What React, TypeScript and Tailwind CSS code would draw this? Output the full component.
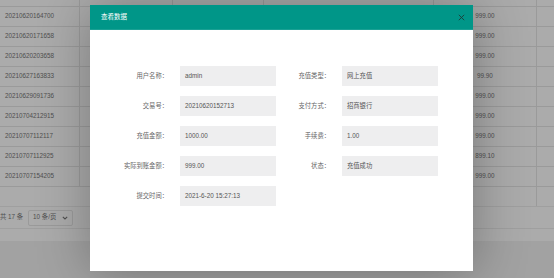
import React from "react";

const rows: [string, string, string, string, string][] = [
  ["20210620152713", "admin", "网上充值", "1000.00", "999.00"],
  ["20210620164700", "", "", "", "999.00"],
  ["20210620171658", "", "", "", "999.00"],
  ["20210620203658", "", "", "", "999.00"],
  ["20210627163833", "", "", "", "99.90"],
  ["20210629091736", "", "", "", "999.00"],
  ["20210704212915", "", "", "", "999.00"],
  ["20210707112117", "", "", "", "999.00"],
  ["20210707112925", "", "", "", "899.10"],
  ["20210707154205", "", "", "", "999.00"],
];

const fields: [string, string][] = [
  ["用户名称：", "admin"],
  ["充值类型：", "网上充值"],
  ["交易号：", "20210620152713"],
  ["支付方式：", "招商银行"],
  ["充值金额：", "1000.00"],
  ["手续费：", "1.00"],
  ["实际到账金额：", "999.00"],
  ["状态：", "充值成功"],
  ["提交时间：", "2021-6-20 15:27:13"],
];

const font = { fontFamily: '"Liberation Sans", "Noto Sans CJK SC", sans-serif' };

export default function App() {
  return (
    <div
      className="relative w-[554px] h-[278px] overflow-hidden bg-[#f2f2f2] text-[6.3px] leading-none"
      style={font}
    >
      {/* underlying page */}
      <div className="bg-white h-[241px] flex flex-col">
        <div className="-mt-[13px] flex flex-col">
          {rows.map((r, i) => (
            <div
              key={i}
              className="grid grid-cols-[80px_93px_91px_170px_103px_1fr] h-[20px] border-b border-[#e6e6e6] text-[#777]"
            >
              <div className="border-r border-[#e6e6e6] flex items-center pl-[5px]">{r[0]}</div>
              <div className="border-r border-[#e6e6e6] flex items-center justify-center">{r[1]}</div>
              <div className="border-r border-[#e6e6e6] flex items-center justify-center">{r[2]}</div>
              <div className="border-r border-[#e6e6e6] flex items-center justify-center">{r[3]}</div>
              <div className="border-r border-[#e6e6e6] flex items-center justify-center">{r[4]}</div>
              <div />
            </div>
          ))}
          <div className="grid grid-cols-[80px_93px_91px_170px_103px_1fr] h-[20px] border-b border-[#eeeeee]">
            <div />
            <div />
            <div />
            <div />
            <div className="border-r border-[#e6e6e6]" />
            <div />
          </div>
        </div>
        <div className="flex items-center h-[22px] border-b border-[#eeeeee] text-[#777]">
          <span>共 17 条</span>
          <div className="ml-[5px] w-[45px] h-[16px] border border-[#e6e6e6] rounded-[2px] flex items-center justify-between px-[4px]">
            <span>10 条/页</span>
            <svg width="6" height="4" viewBox="0 0 6 4">
              <path d="M0.8 0.8 L3 3 L5.2 0.8" fill="none" stroke="#777" strokeWidth="1.1" />
            </svg>
          </div>
        </div>
      </div>

      {/* shade */}
      <div className="absolute inset-0 bg-black/[0.33]" />

      {/* modal */}
      <div className="absolute left-[90px] top-[5px] w-[383px] h-[266px] bg-white shadow-[1px_1px_50px_rgba(0,0,0,0.3)] flex flex-col">
        <div className="h-[25px] bg-[#009688] flex items-center justify-between pl-[11px] pr-[8px] border-b border-[#1aa094]">
          <span className="text-white text-[6.5px]">查看数据</span>
          <svg width="7" height="7" viewBox="0 0 7 7">
            <path d="M0.8 0.8 L6.2 6.2 M6.2 0.8 L0.8 6.2" stroke="#1f3b38" strokeWidth="0.9" />
          </svg>
        </div>
        <div className="grid grid-cols-[162px_162px] gap-y-[10px] pl-[24px] pt-[36px]">
          {fields.map(([label, value], i) => (
            <div key={i} className="flex items-center">
              <div className="w-[54px] text-right text-[#666] whitespace-nowrap">{label}</div>
              <div className="ml-[12px] w-[96px] h-[20px] bg-[#eeeeef] flex items-center pl-[5px] text-[#555]">
                {value}
              </div>
            </div>
          ))}
        </div>
      </div>
    </div>
  );
}
